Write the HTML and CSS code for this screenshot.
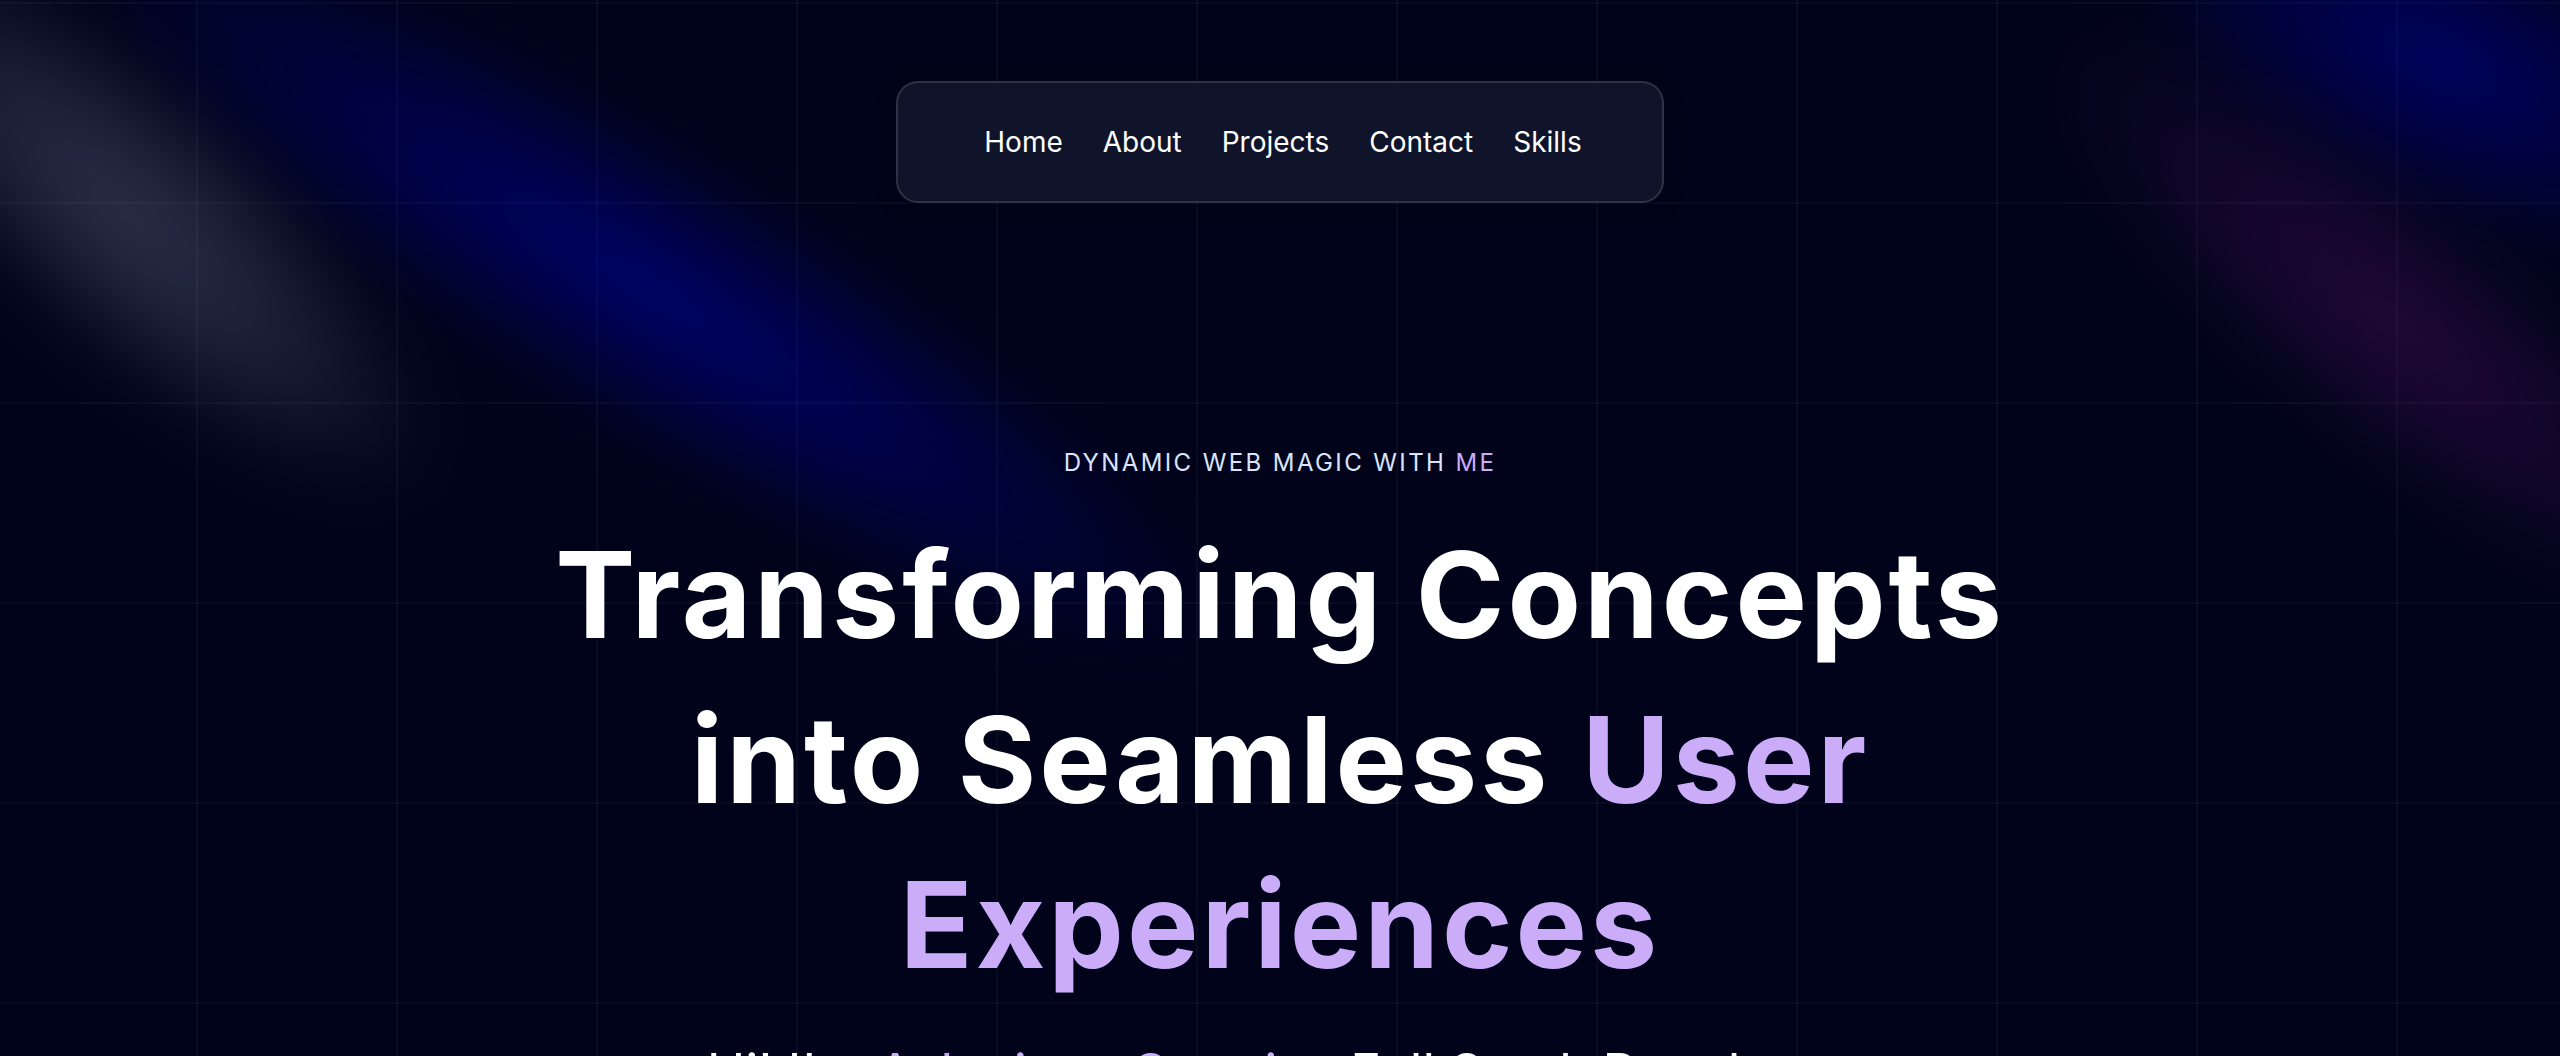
FILE: index.html
```html
<!DOCTYPE html>
<html lang="en">
<head>
<meta charset="utf-8">
<title>Portfolio</title>
<link rel="stylesheet" href="styles.css">
</head>
<body>
<div class="page">
  <div class="grid-bg"></div>
  <div class="spot spot-white"></div>
  <div class="spot spot-blue"></div>
  <div class="spot spot-blue-right"></div>
  <div class="spot spot-purple"></div>

  <header class="nav-wrap">
    <nav class="nav">
      <a class="nav-link" href="#home">Home</a>
      <a class="nav-link" href="#about">About</a>
      <a class="nav-link" href="#projects">Projects</a>
      <a class="nav-link" href="#contact">Contact</a>
      <a class="nav-link" href="#skills">Skills</a>
    </nav>
  </header>

  <main class="hero">
    <p class="eyebrow">DYNAMIC WEB MAGIC WITH <span class="accent">ME</span></p>
    <h1 class="title">Transforming Concepts into Seamless <span class="accent">User Experiences</span></h1>
    <p class="intro">Hi! I'm <span class="accent">Ashwin</span>, a <span class="accent">Creative</span> Full Stack Developer</p>
  </main>
</div>
</body>
</html>
```

FILE: styles.css
```css
* { box-sizing: border-box; }

html, body {
  margin: 0;
  padding: 0;
  background: #000319;
  overflow: hidden;
}

body {
  font-family: Inter, "Noto Sans", "Liberation Sans", sans-serif;
  color: #ffffff;
}

.page {
  position: relative;
  width: 100%;
  height: 1056px;
  overflow: hidden;
  background: #000319;
}

.grid-bg {
  position: absolute;
  inset: 0;
  background-image:
    linear-gradient(to right, rgba(255,255,255,0.035) 2px, transparent 2px),
    linear-gradient(to bottom, rgba(255,255,255,0.035) 2px, transparent 2px);
  background-size: 200px 200px;
  background-position: 196px 202px;
  pointer-events: none;
}

.spot {
  position: absolute;
  pointer-events: none;
  filter: blur(30px);
}

.spot-white {
  left: -270px;
  top: 80px;
  width: 800px;
  height: 270px;
  background: radial-gradient(closest-side, rgba(205,210,240,0.22), rgba(200,205,235,0.12) 55%, transparent);
  transform: rotate(42deg);
}

.spot-blue {
  left: -30px;
  top: 150px;
  width: 1360px;
  height: 280px;
  background: radial-gradient(closest-side, rgba(0,0,220,0.42), rgba(0,0,200,0.22) 55%, transparent);
  transform: rotate(32deg);
}

.spot-blue-right {
  left: 2100px;
  top: -90px;
  width: 680px;
  height: 300px;
  background: radial-gradient(closest-side, rgba(0,0,210,0.4), rgba(0,0,190,0.2) 60%, transparent);
  transform: rotate(25deg);
}

.spot-purple {
  left: 1940px;
  top: 190px;
  width: 900px;
  height: 260px;
  background: radial-gradient(closest-side, rgba(120,20,130,0.3), rgba(100,20,130,0.14) 60%, transparent);
  transform: rotate(40deg);
}

.nav-wrap {
  position: relative;
  z-index: 2;
  display: flex;
  justify-content: center;
  padding-top: 81px;
}

.nav {
  display: flex;
  align-items: center;
  gap: 40px;
  height: 122px;
  padding: 0 80px 0 86px;
  background: #10142a;
  border: 2px solid rgba(255,255,255,0.13);
  border-radius: 22px;
  box-shadow: 0 4px 20px rgba(0,0,0,0.25);
}

.nav-link {
  color: #ffffff;
  text-decoration: none;
  font-size: 28px;
  font-weight: 400;
  line-height: 34px;
}

.hero {
  position: relative;
  z-index: 2;
  display: flex;
  flex-direction: column;
  align-items: center;
  text-align: center;
  padding-top: 244px;
}

.eyebrow {
  margin: 0;
  font-size: 24px;
  line-height: 32px;
  letter-spacing: 0.1em;
  color: #dbe3fd;
  font-weight: 400;
}

.accent { color: #cbacf9; }

.title {
  margin: 33px 0 0;
  max-width: 1536px;
  font-size: 120px;
  line-height: 165px;
  font-weight: 700;
  letter-spacing: 0.025em;
  color: #ffffff;
}

.intro {
  margin: 35px 0 0;
  font-size: 52px;
  line-height: 62px;
  font-weight: 400;
  letter-spacing: 0;
  color: #ffffff;
}
```
